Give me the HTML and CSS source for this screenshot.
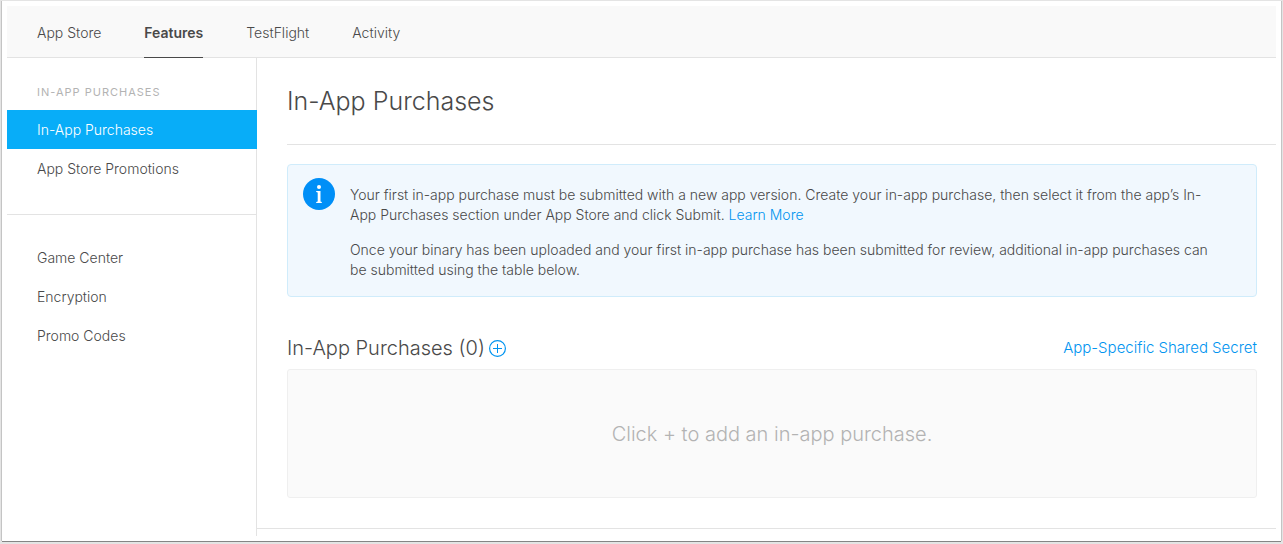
FILE: index.html
```html
<!DOCTYPE html>
<html lang="en">
<head>
<meta charset="utf-8">
<title>In-App Purchases</title>
<meta name="viewport" content="width=device-width, initial-scale=1">
<link rel="stylesheet" href="styles.css">
</head>
<body>
<div class="window">
  <nav class="tabs" aria-label="App sections">
    <a class="tab" href="#store">App Store</a>
    <a class="tab tab-active" href="#features" aria-current="page">Features</a>
    <a class="tab" href="#testflight">TestFlight</a>
    <a class="tab" href="#activity">Activity</a>
  </nav>
  <div class="layout">
    <nav class="sidebar" aria-label="Features">
      <div class="side-group">
        <h2 class="side-heading">In-App Purchases</h2>
        <a class="side-link side-link-active" href="#iap" aria-current="page">In-App Purchases</a>
        <a class="side-link" href="#promotions">App Store Promotions</a>
      </div>
      <div class="side-group side-group-more">
        <a class="side-link" href="#gamecenter">Game Center</a>
        <a class="side-link" href="#encryption">Encryption</a>
        <a class="side-link" href="#codes">Promo Codes</a>
      </div>
    </nav>
    <main class="main">
      <h1 class="title">In-App Purchases</h1>
      <div class="content">
        <section class="notice">
          <svg class="notice-icon" viewBox="0 0 32 32" aria-hidden="true">
            <circle cx="16" cy="16" r="16" fill="#008ff7"/>
            <circle cx="16" cy="9" r="2" fill="#fff"/>
            <path d="M13.200 13h4.300v10.600l1.300.4v1h-5.600v-1l1.500-.4v-9l-1.500-.6z" fill="#fff"/>
          </svg>
          <div class="notice-text">
            <p>Your first in-app purchase must be submitted with a new app version. Create your in-app purchase, then select it from the app’s In-App Purchases section under App Store and click Submit. <a class="link" href="#learn">Learn More</a></p>
            <p>Once your binary has been uploaded and your first in-app purchase has been submitted for review, additional in-app purchases can be submitted using the table below.</p>
          </div>
        </section>
        <div class="list-head">
          <h2 class="list-title">In-App Purchases (0)</h2>
          <button class="add" type="button" aria-label="Add in-app purchase">
            <svg class="add-icon" viewBox="0 0 17 17" fill="none" stroke="#0094f0" aria-hidden="true">
              <circle cx="8.500" cy="8.500" r="7.900" stroke-width="1.200"/>
              <path d="M8.500 4v9M4 8.500h9"/>
            </svg>
          </button>
          <a class="link secret" href="#secret">App-Specific Shared Secret</a>
        </div>
        <div class="empty">Click + to add an in-app purchase.</div>
      </div>
    </main>
  </div>
</div>
</body>
</html>
```

FILE: styles.css
```css
* {
  box-sizing: border-box;
}

body {
  margin: 0;
  padding: 1px 2px 3px;
  min-height: 100vh;
  display: flex;
  background: #e4e4e4;
  color: #494949;
  font: 300 14px/20px Inter, "Liberation Sans", sans-serif;
}

h1, h2, p {
  margin: 0;
  font-weight: 300;
}

a {
  color: inherit;
  text-decoration: none;
}

.window {
  flex: 1;
  display: flex;
  flex-direction: column;
  padding: 5px;
  background: #fff;
  box-shadow: 0 1px 0 #858585, -1px 0 0 #c4c4c4, 1px 0 0 #c4c4c4;
}

.tabs {
  display: flex;
  gap: 43px;
  height: 52px;
  padding: 0 30px;
  background: #f9f9f9;
  border-bottom: 1px solid #e3e3e3;
}

.tab {
  height: 52px;
  padding-top: 17px;
}

.tab-active {
  font-weight: 600;
  border-bottom: 1px solid #494949;
}

.layout {
  flex: 1;
  display: flex;
}

.sidebar {
  flex: none;
  width: 250px;
  border-right: 1px solid #e3e3e3;
}

.side-group {
  padding: 24px 0 26px;
}

.side-group-more {
  padding-top: 23px;
  border-top: 1px solid #e3e3e3;
}

.side-heading {
  padding: 0 30px 8px;
  color: #b3b3b3;
  font-size: 11px;
  font-weight: 400;
  letter-spacing: 1px;
  text-transform: uppercase;
}

.side-link {
  display: block;
  padding: 10px 30px 9px;
}

.side-link-active {
  margin-right: -1px;
  background: #08adf8;
  color: #fff;
}

.main {
  flex: 1;
  min-width: 0;
  margin-bottom: 7px;
  border-bottom: 1px solid #e3e3e3;
}

.title {
  margin-left: 30px;
  padding: 27px 0;
  border-bottom: 1px solid #e3e3e3;
  font-size: 25px;
  line-height: 32px;
}

.content {
  padding: 19px 19px 30px 30px;
}

.notice {
  display: flex;
  gap: 15px;
  padding: 13px 40px 16px 15px;
  border: 1px solid #d0ecfb;
  border-radius: 4px;
  background: #f1f8fe;
}

.notice-icon {
  flex: none;
  width: 32px;
  height: 32px;
}

.notice-text {
  display: grid;
  gap: 15px;
  padding-top: 7px;
}

.link {
  color: #0094f0;
}

.list-head {
  display: flex;
  align-items: center;
  gap: 4px;
  padding: 38px 0 8px;
}

.list-title {
  font-size: 20px;
  line-height: 26px;
}

.add {
  display: flex;
  padding: 0;
  border: 0;
  background: none;
}

.add-icon {
  width: 17px;
  height: 17px;
}

.secret {
  margin-left: auto;
  font-size: 15px;
}

.empty {
  padding: 51px 20px 50px;
  border: 1px solid #efefef;
  border-radius: 3px;
  background: #fafafa;
  color: #b3b3b3;
  font-size: 20px;
  line-height: 26px;
  text-align: center;
}
```
